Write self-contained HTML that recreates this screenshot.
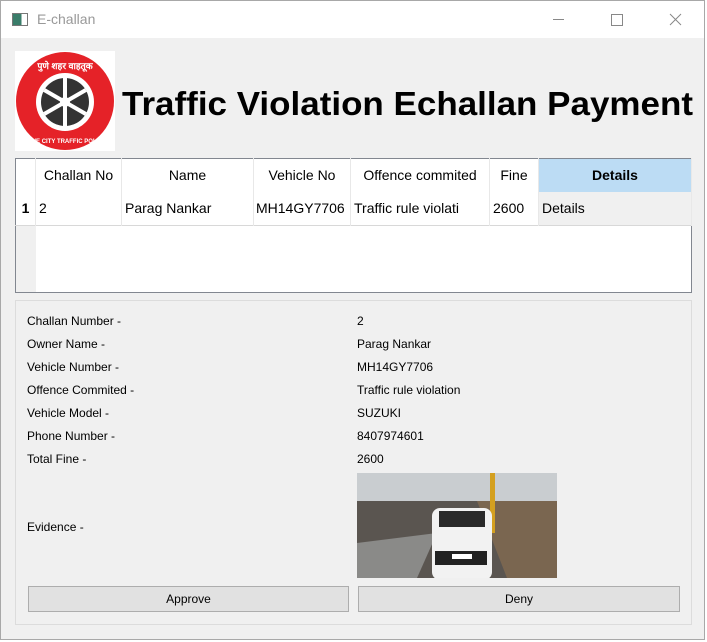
<!DOCTYPE html>
<html><head><meta charset="utf-8"><style>
*{margin:0;padding:0;box-sizing:border-box}
body{width:707px;height:642px;background:#fff;position:relative;overflow:hidden;font-family:"Liberation Sans","DejaVu Sans",sans-serif;font-size:12px;color:#000}
.win{position:absolute;left:0;top:0;width:705px;height:640px;border:1px solid #a8a8a8;background:#f0f0f0}
.title{position:absolute;left:0;top:0;width:703px;height:37px;background:#fff}
.abs{position:absolute}
.t{position:absolute;white-space:nowrap}
table{position:absolute;left:14px;top:157px;width:677px;height:135px;border:1px solid #828790;border-collapse:collapse;background:#fff;font-size:14px}
td{padding:0 3px;border-right:1px solid #e8e8e8;white-space:nowrap}
.lab{position:absolute;left:26px;font-size:12px}
.val{position:absolute;left:356px;font-size:12px}
.btn{position:absolute;top:585px;height:26px;background:#e1e1e1;border:1px solid #adadad;text-align:center;line-height:24px;font-size:12px}
</style></head><body>
<div class="win">
<div class="title">
 <div class="abs" style="left:11px;top:12px;width:16px;height:13px;border:1px solid #777;background:linear-gradient(90deg,#3a7d6a 0 60%,#fff 60%)"></div>
 <div class="t" style="left:36px;top:10px;font-size:14px;color:#999">E-challan</div>
 <div class="abs" style="left:552px;top:18px;width:11px;height:1px;background:#888"></div>
 <div class="abs" style="left:610px;top:13px;width:12px;height:12px;border:1px solid #888"></div>
 <svg class="abs" style="left:668px;top:12px" width="13" height="13"><path d="M1 1L12 12M12 1L1 12" stroke="#888" stroke-width="1"/></svg>
</div>
<svg class="abs" style="left:14px;top:50px" width="100" height="100">
 <rect width="100" height="100" fill="#fff"/>
 <circle cx="50" cy="50" r="49" fill="#e52228"/>
 <circle cx="50" cy="51" r="29" fill="#fff"/>
 <circle cx="50" cy="51" r="24" fill="#333"/>
 <g stroke="#fff" stroke-width="4"><path d="M50 27V75M29.2 39L70.8 63M29.2 63L70.8 39"/></g>
 <circle cx="50" cy="51" r="5" fill="#fff"/>
 <text x="50" y="18" font-size="9" fill="#fff" text-anchor="middle" font-weight="bold">पुणे शहर वाहतूक</text>
 <text x="50" y="92" font-size="6" fill="#fff" text-anchor="middle" font-weight="bold">PUNE CITY TRAFFIC POLICE</text>
</svg>
<svg class="abs" style="left:120px;top:80px" width="575" height="44"><text x="1" y="34" font-family="Liberation Sans, sans-serif" font-weight="bold" font-size="33" textLength="571" lengthAdjust="spacingAndGlyphs">Traffic Violation Echallan Payment</text></svg>
<table>
<tr style="height:33px">
<td style="width:20px;background:#fff"></td>
<td style="width:86px;text-align:center">Challan No</td>
<td style="width:132px;text-align:center">Name</td>
<td style="width:97px;text-align:center">Vehicle No</td>
<td style="width:139px;text-align:center">Offence commited</td>
<td style="width:49px;text-align:center">Fine</td>
<td style="text-align:center;background:#bcdcf4;font-weight:bold">Details</td>
</tr>
<tr style="height:34px;border-bottom:1px solid #d8d8d8">
<td style="font-weight:bold;text-align:center;padding:0">1</td>
<td>2</td><td>Parag Nankar</td><td style="padding:0 2px">MH14GY7706</td><td>Traffic rule violati</td><td>2600</td><td style="background:#f0f0f0">Details</td>
</tr>
<tr><td style="background:#f0f0f0;border:none"></td><td colspan="6" style="border:none"></td></tr>
</table>
<div class="abs" style="left:14px;top:299px;width:677px;height:325px;border:1px solid #dcdcdc"></div>
<div class="lab" style="top:313px">Challan Number -</div><div class="val" style="top:313px">2</div>
<div class="lab" style="top:336px">Owner Name -</div><div class="val" style="top:336px">Parag Nankar</div>
<div class="lab" style="top:359px">Vehicle Number -</div><div class="val" style="top:359px">MH14GY7706</div>
<div class="lab" style="top:382px">Offence Commited -</div><div class="val" style="top:382px">Traffic rule violation</div>
<div class="lab" style="top:405px">Vehicle Model -</div><div class="val" style="top:405px">SUZUKI</div>
<div class="lab" style="top:428px">Phone Number -</div><div class="val" style="top:428px">8407974601</div>
<div class="lab" style="top:451px">Total Fine -</div><div class="val" style="top:451px">2600</div>
<div class="lab" style="top:519px">Evidence -</div>
<svg class="abs" style="left:356px;top:472px" width="200" height="105">
 <rect width="200" height="105" fill="#c9cdd0"/>
 <rect y="28" width="200" height="77" fill="#5a5550"/>
 <polygon points="120,28 200,28 200,105 150,105" fill="#7a6650"/>
 <polygon points="0,70 80,60 60,105 0,105" fill="#8a8a88"/>
 <rect x="133" y="0" width="5" height="60" fill="#d4a020"/>
 <rect x="75" y="35" width="60" height="72" rx="8" fill="#f2f2f2"/>
 <rect x="82" y="38" width="46" height="16" fill="#2a2a2a"/>
 <rect x="78" y="78" width="52" height="14" fill="#222"/>
 <rect x="95" y="81" width="20" height="5" fill="#fff"/>
</svg>
<div class="btn" style="left:27px;width:321px">Approve</div>
<div class="btn" style="left:357px;width:322px">Deny</div>
</div>
</body></html>
